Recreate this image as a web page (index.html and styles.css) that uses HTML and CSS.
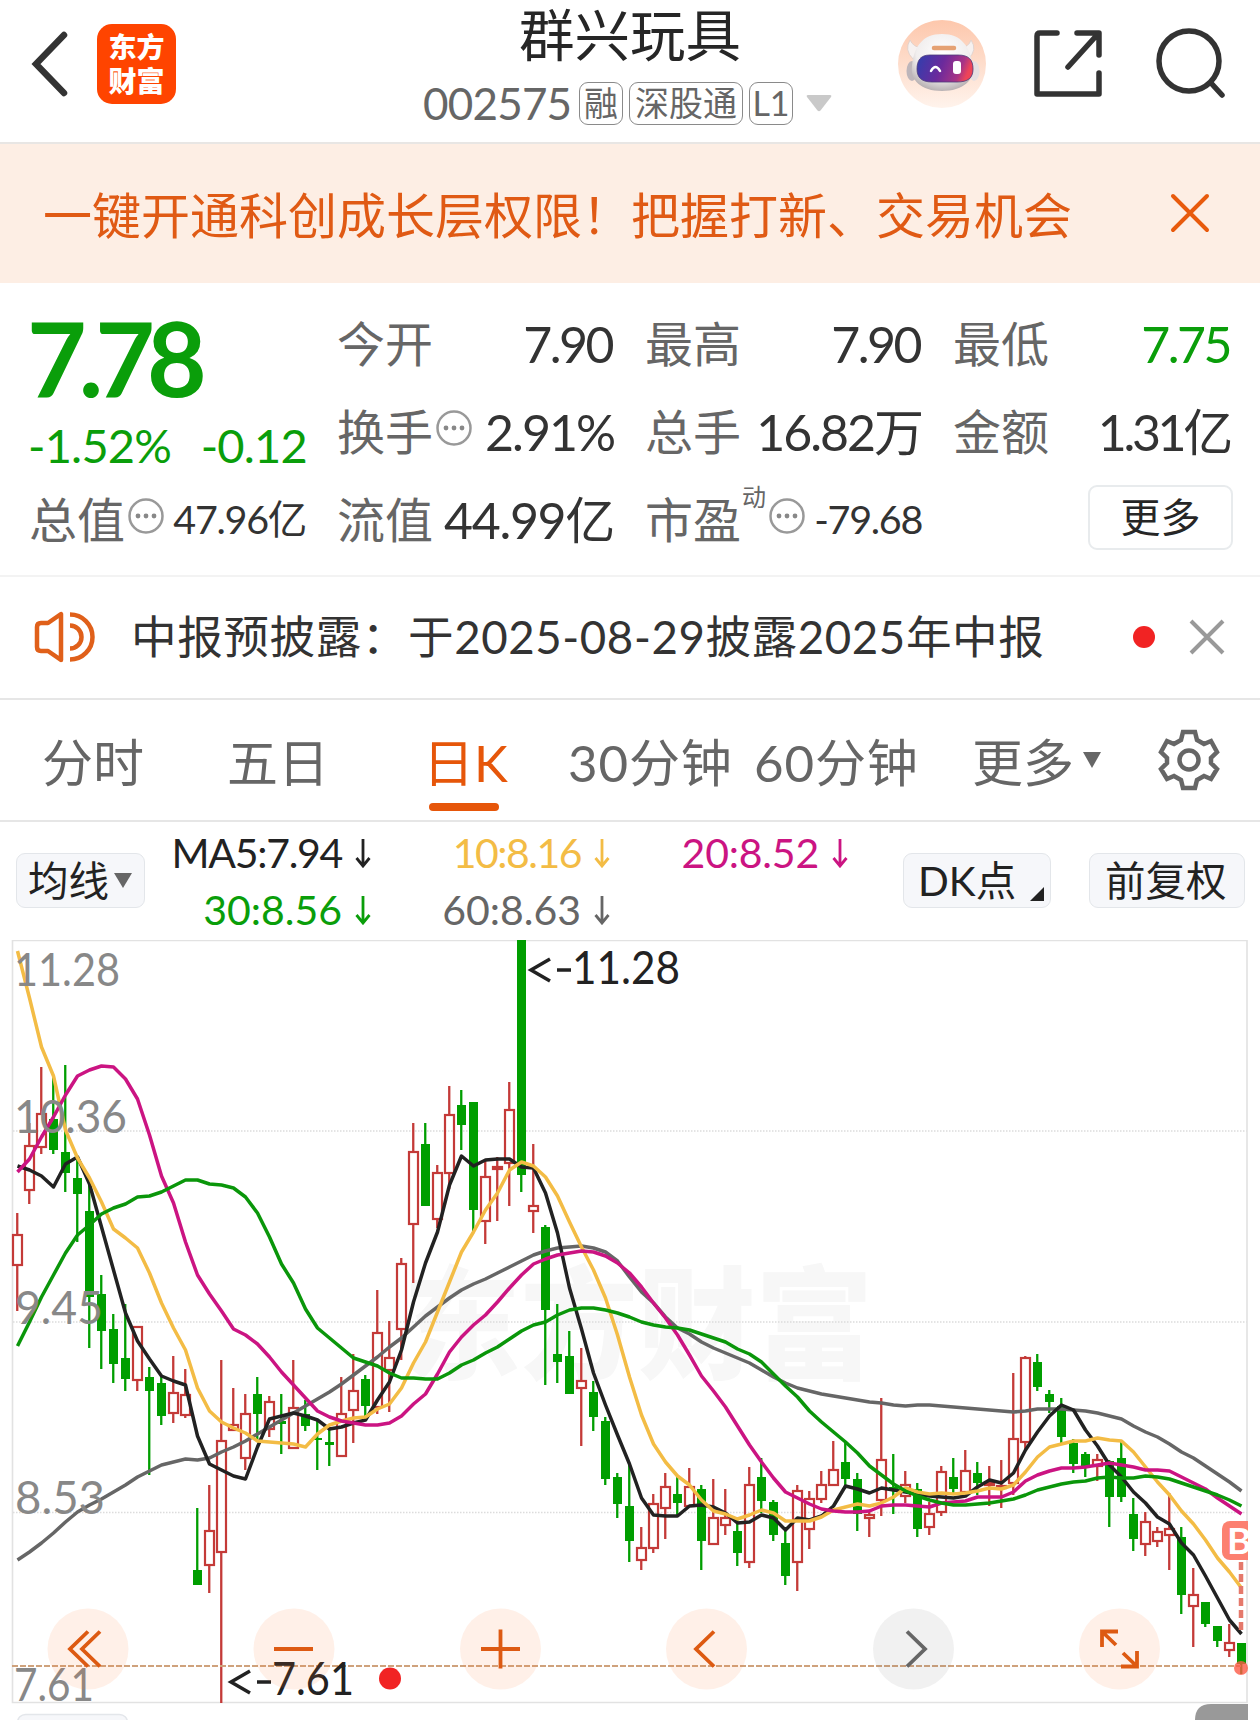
FILE: index.html
```html
<!DOCTYPE html>
<html lang="zh-CN">
<head>
<meta charset="utf-8">
<title>群兴玩具 002575</title>
<link rel="stylesheet" href="styles.css">
</head>
<body>
<header class="header">
  <svg class="back" width="44" height="72" viewBox="0 0 44 72"><path d="M38 7 10 36l28 29" fill="none" stroke="#333" stroke-width="6.500" stroke-linecap="round"/></svg>
  <div class="logo"><span>东方</span><span>财富</span></div>
  <div class="stock">
    <h1 class="stock-name">群兴玩具</h1>
    <div class="stock-meta">
      <span class="code">002575</span>
      <span class="tag tag-one">融</span>
      <span class="tag tag-three">深股通</span>
      <span class="tag tag-one">L1</span>
      <svg class="caret" width="26" height="18" viewBox="0 0 26 18"><path d="M2 1h22q2 0 1 2L14.500 16.500q-1.500 1.500-3 0L1 3Q0 1 2 1z" fill="#c9c9c9"/></svg>
    </div>
  </div>
  <svg class="avatar" width="88" height="88" viewBox="0 0 88 88">
    <defs>
      <linearGradient id="halo" x1="0" y1="0" x2="0" y2="1"><stop offset="0" stop-color="#fdc7ac"/><stop offset="1" stop-color="#fff3ec"/></linearGradient>
      <linearGradient id="visor" x1="0" y1="0" x2="1" y2="0.200"><stop offset="0" stop-color="#2f3fae"/><stop offset="0.500" stop-color="#6b2a9c"/><stop offset="0.850" stop-color="#a83486"/><stop offset="1" stop-color="#ee4458"/></linearGradient>
      <radialGradient id="shell" cx="0.500" cy="0.350" r="0.650"><stop offset="0" stop-color="#fff"/><stop offset="0.650" stop-color="#f1eeee"/><stop offset="1" stop-color="#b9b2b4"/></radialGradient>
    </defs>
    <circle cx="44" cy="44" r="44" fill="url(#halo)"/>
    <path d="M12 20q-6 10 3 19l9-11q-9-1-12-8zM73 20q7 10-3 19l-8-11q9-1 11-8z" fill="#f6f1f0" stroke="#dccfcb" stroke-width="0.800"/>
    <ellipse cx="14" cy="51" rx="5.500" ry="10" fill="#bdb5ba"/><ellipse cx="76" cy="51" rx="5.500" ry="10" fill="#e6dfe1"/>
    <path d="M44 14c20 0 28 13 31 32 2 14-10 25-31 25S12 60 14 46c2-19 10-32 30-32z" fill="url(#shell)"/>
    <path d="M36 28h20" stroke="#e5a173" stroke-width="4.500" stroke-linecap="round"/>
    <path d="M32 35h28c11 0 15 5 15 14s-5 13-16 13H34c-11 0-15-5-15-13s3-14 13-14z" fill="url(#visor)" stroke="#4b3a78" stroke-width="0.800"/>
    <path d="M33 51q4.500-8 9 0" fill="none" stroke="#fff" stroke-width="2.500" stroke-linecap="round"/>
    <rect x="55" y="41" width="8" height="13" rx="3" fill="#fff"/>
  </svg>
  <svg class="share" width="72" height="72" viewBox="0 0 72 72" fill="none" stroke="#333" stroke-width="5.500" stroke-linecap="round" stroke-linejoin="round"><path d="M25 6H8Q5 6 5 9v58h62V46M45 6h22v22M65 8 36 40"/></svg>
  <svg class="search" width="74" height="76" viewBox="0 0 74 76" fill="none" stroke="#333" stroke-width="5.500" stroke-linecap="round"><circle cx="35" cy="36" r="30"/><path d="m57 58 11 12"/></svg>
</header>

<section class="banner">
  <p>一键开通科创成长层权限！把握打新、交易机会</p>
  <svg width="42" height="42" viewBox="0 0 42 42"><path d="m4 4 34 34M38 4 4 38" stroke="#e85a0c" stroke-width="4" stroke-linecap="round"/></svg>
</section>

<section class="quote">
  <div class="price-block">
    <div class="price">7.78</div>
    <div class="change"><span>-1.52%</span><span>-0.12</span></div>
  </div>
  <div class="cell"><span class="label">今开</span><span class="value tight">7.90</span></div>
  <div class="cell"><span class="label">最高</span><span class="value tight">7.90</span></div>
  <div class="cell"><span class="label">最低</span><span class="value tight down">7.75</span></div>
  <div class="cell"><span class="label">换手</span><svg class="info" viewBox="0 0 36 36"><use href="#dots"/></svg><span class="value">2.91%</span></div>
  <div class="cell"><span class="label">总手</span><span class="value">16.82万</span></div>
  <div class="cell"><span class="label">金额</span><span class="value v-amt">1.31亿</span></div>
  <div class="cell"><span class="label">总值</span><svg class="info" viewBox="0 0 36 36"><use href="#dots"/></svg><span class="value small">47.96亿</span></div>
  <div class="cell"><span class="label">流值</span><span class="value v-float">44.99亿</span></div>
  <div class="cell"><span class="label">市盈</span><sup>动</sup><svg class="info" viewBox="0 0 36 36"><use href="#dots"/></svg><span class="value small">-79.68</span></div>
  <div class="cell last"><button class="more">更多</button></div>
</section>

<svg class="defs" width="0" height="0"><defs><g id="dots"><circle cx="18" cy="18" r="16.500" fill="none" stroke="#999" stroke-width="2.500"/><circle cx="10" cy="18" r="2.400" fill="#888"/><circle cx="18" cy="18" r="2.400" fill="#888"/><circle cx="26" cy="18" r="2.400" fill="#888"/></g></defs></svg>

<section class="notice">
  <svg class="speaker" width="62" height="54" viewBox="0 0 62 54" fill="none" stroke="#e0601a" stroke-width="4.500" stroke-linejoin="round"><path d="M4 17q0-4 4-4h7L28 4v46L15 41H8q-4 0-4-4z"/><path d="M37 4.500a22.500 22.500 0 0 1 0 45M37 15.500a11.500 11.500 0 0 1 0 23"/></svg>
  <p>中报预披露：于2025-08-29披露2025年中报</p>
  <i class="dot"></i>
  <svg class="close" width="36" height="36" viewBox="0 0 36 36"><path d="m2 2 32 32M34 2 2 34" stroke="#999" stroke-width="4"/></svg>
</section>

<nav class="tabs">
  <span class="t1">分时</span><span class="t2">五日</span><span class="t3 active">日K</span><span class="t4">30分钟</span><span class="t5">60分钟</span><span class="t6">更多</span>
  <svg class="tri" width="18" height="16" viewBox="0 0 18 16"><path d="M0 0h18L9 16z" fill="#666"/></svg>
  <svg class="gear" width="62" height="62" viewBox="0 0 62 62" fill="none" stroke="#666" stroke-width="4.500"><path d="M25 3H37L39 11 46 15 53 12 59 23 53 29V34L59 40 53 50 46 47 39 51 37 59H25L23 51 16 47 9 50 3 40 9 34V29L3 23 9 12 16 15 23 11z"/><circle cx="31" cy="31" r="9.500"/></svg>
</nav>

<section class="indicators">
  <button class="chip ma">均线<svg width="18" height="15" viewBox="0 0 18 15"><path d="M0 0h18L9 15z" fill="#666"/></svg></button>
  <div class="ma-grid">
    <span class="c5">MA5:7.94<svg class="arrow" viewBox="0 0 16 30"><use href="#down"/></svg></span>
    <span class="c10">10:8.16<svg class="arrow" viewBox="0 0 16 30"><use href="#down"/></svg></span>
    <span class="c20">20:8.52<svg class="arrow" viewBox="0 0 16 30"><use href="#down"/></svg></span>
    <span class="c30">30:8.56<svg class="arrow" viewBox="0 0 16 30"><use href="#down"/></svg></span>
    <span class="c60">60:8.63<svg class="arrow" viewBox="0 0 16 30"><use href="#down"/></svg></span>
  </div>
  <button class="chip dk">DK点<svg width="14" height="14" viewBox="0 0 14 14"><path d="M14 0v14H0z" fill="#222"/></svg></button>
  <button class="chip fq">前复权</button>
</section>
<svg class="defs" width="0" height="0"><defs><path id="down" d="M8 1v27M1.500 20 8 28l6.500-8" fill="none" stroke="currentColor" stroke-width="2.800"/></defs></svg>

<svg class="chart" width="1260" height="780" viewBox="0 940 1260 780">
  <defs><clipPath id="plot"><rect x="11" y="939" width="1237" height="765"/></clipPath></defs>
  <text class="watermark" x="403" y="1369" textLength="470" lengthAdjust="spacingAndGlyphs">东方财富</text>
  <path d="M13 1131H1247M13 1322H1247M13 1512.500H1247" stroke="#dcdcdc" stroke-width="1.500" stroke-dasharray="1.500 1.500"/>
  <path d="M12.500 940.500H1247V1702.500H12.500z" fill="none" stroke="#e2e2e2" stroke-width="1.600"/>
  <g id="candles" clip-path="url(#plot)"></g>
  <g id="averages" class="averages"></g>
  <g class="axis">
    <text x="14" y="986" textLength="106" lengthAdjust="spacingAndGlyphs">11.28</text>
    <text x="14" y="1133" textLength="113" lengthAdjust="spacingAndGlyphs">10.36</text>
    <text x="15" y="1324" textLength="88" lengthAdjust="spacingAndGlyphs">9.45</text>
    <text x="15" y="1514" textLength="90" lengthAdjust="spacingAndGlyphs">8.53</text>
    <text x="14" y="1701" textLength="80" lengthAdjust="spacingAndGlyphs">7.61</text>
  </g>
  <path d="M12 1666H1241" stroke="#cfa27c" stroke-width="1.800" stroke-dasharray="6 2"/>
  <g class="mark">
    <path d="M550 959 531 970l19 11M557 970h14M250 1671l-19 11 19 11M257 1682h14"/>
    <text x="572" y="984" textLength="108" lengthAdjust="spacingAndGlyphs">11.28</text>
    <text x="272" y="1695" textLength="82" lengthAdjust="spacingAndGlyphs">7.61</text>
  </g>
  <g clip-path="url(#plot)">
    <rect x="1222" y="1521" width="48" height="39" rx="8" fill="#fc8070"/>
    <text class="buy" x="1227" y="1554">B</text>
    <path d="M1241 1562v68" stroke="#e5796b" stroke-width="4.500" stroke-dasharray="8 4"/>
    <circle cx="1241" cy="1668" r="7" fill="#fc5a46" fill-opacity=".8"/>
  </g>
  <circle cx="390" cy="1678.500" r="11" fill="#f12323"/>
  <g fill="#ff7a30" fill-opacity=".11"><circle cx="88" cy="1649" r="40.500"/><circle cx="294" cy="1649" r="40.500"/><circle cx="500.500" cy="1649" r="40.500"/><circle cx="706.500" cy="1649" r="40.500"/><circle cx="1119.500" cy="1649" r="40.500"/></g>
  <circle cx="913.500" cy="1649" r="40.500" fill="#777" fill-opacity=".1"/>
  <g fill="none" stroke="#dd5a12" stroke-width="3.800">
    <path d="M88 1631.500 70 1649l18 17.500M100 1631.500 82 1649l18 17.500M274 1649h39M481 1649h39M500.500 1629.500v39M714 1631.500 696 1649l18 17.500"/>
    <path d="M1102 1647v-15.500h16M1103 1632.500l13 12.500M1137 1651v15.500h-16M1136 1665.500l-13-12.500"/>
  </g>
  <path d="m907 1631.500 18 17.500-18 17.500" fill="none" stroke="#666" stroke-width="3.800"/>
  <rect x="17.500" y="1714.500" width="110" height="30" rx="8" fill="#f6f7fa" stroke="#e3e6ea" stroke-width="1.500"/>
  <path d="M1195 1720q0-16 16-16h37v16z" fill="#999"/>
</svg>
<script src="chart.js"></script>
</body>
</html>
```
FILE: styles.css
```css
* { box-sizing: border-box; }
body { margin: 0; width: 1260px; height: 1720px; overflow: hidden; background: #fff; color: #262626; font-family: "Lato", "Noto Sans CJK SC", sans-serif; }
h1, p { margin: 0; font-weight: 400; white-space: nowrap; }
button { font-family: inherit; color: inherit; padding: 0; white-space: nowrap; }
svg { display: block; flex: none; }
.defs { position: absolute; }

.header { display: flex; height: 144px; border-bottom: 2px solid #e8e6e4; }
.back { margin: 28px 0 0 26px; }
.logo { display: flex; flex-direction: column; align-items: center; justify-content: center; width: 79px; height: 80px; margin: 24px 0 0 27px; border-radius: 15px; background: #ff4400; color: #fff; font-weight: 900; font-size: 28px; line-height: 34px; }
.stock { display: flex; flex-direction: column; margin-left: 247px; width: 411px; }
.stock-name { margin-left: 96px; font-size: 55.500px; line-height: 70px; }
.stock-meta { display: flex; align-items: center; height: 44px; margin-top: 11px; color: #666; }
.code { width: 156px; font-size: 44px; line-height: 44px; letter-spacing: -0.800px; }
.tag { display: flex; align-items: center; justify-content: center; height: 43px; margin-right: 6px; border: 1.500px solid #8a8a8a; border-radius: 9px; font-size: 34px; line-height: 38px; }
.tag-one { width: 44px; }
.tag-three { width: 114px; }
.caret { margin-left: 7px; }
.avatar { margin: 20px 0 0 64px; }
.share { margin: 27px 0 0 46px; }
.search { margin: 25px 0 0 50px; }

.banner { display: flex; justify-content: space-between; align-items: center; height: 139px; padding: 0 49px 0 43px; background: #fdeee4; color: #e05a14; font-size: 49px; line-height: 70px; }
.banner p { margin-top: 3px; }
.banner svg { margin-top: -2px; }

.quote { display: grid; grid-template-columns: repeat(4, 276px); grid-template-rows: 88px 88px 88px; column-gap: 32px; height: 294px; padding: 16px 0 0 30px; border-bottom: 2px solid #f3f3f3; }
.price-block { grid-row: span 2; color: #0a9e0a; }
.price { height: 100px; margin: 8px 0 0 -3px; font-size: 103px; font-weight: 700; line-height: 100px; letter-spacing: -8px; }
.change { display: flex; justify-content: space-between; margin: 3px -1px 0 -2px; font-size: 47px; line-height: 70px; letter-spacing: -0.800px; }
.cell { display: flex; align-items: center; height: 88px; white-space: nowrap; }
.label { margin: 2px 0 0 -1px; color: #666; font-size: 48px; line-height: 60px; }
.value { margin: 2px 0 0 auto; font-size: 50px; line-height: 60px; color: #333; letter-spacing: -2px; }
.tight { margin-right: 2px; letter-spacing: -2.500px; }
.v-amt { letter-spacing: -3.300px; }
.v-float { letter-spacing: -1.300px; }
.small { margin-top: 0; font-size: 39.500px; letter-spacing: -1.300px; }
.down { margin-right: 0; color: #0a9e0a; }
.info { width: 36px; height: 36px; margin: -7px 0 0 3px; }
.cell sup { align-self: flex-start; margin: 7px 0 0 1px; font-size: 24px; line-height: 30px; color: #666; }
.last { justify-content: flex-end; }
.more { width: 145px; height: 65px; margin: -4px -3px 0 0; border: 2px solid #e8ebed; border-radius: 9px; background: #fff; font-size: 40px; line-height: 50px; }

.notice { display: flex; align-items: center; height: 123px; padding: 0 35px 2px 33px; border-bottom: 2px solid #e6e6e6; color: #333; font-size: 45.600px; letter-spacing: 0.580px; }
.notice p { flex: 1; margin-left: 36px; line-height: 60px; }
.dot { width: 22px; height: 22px; border-radius: 50%; background: #f12323; }
.close { margin-left: 34px; }

.tabs { display: flex; align-items: center; height: 122px; border-bottom: 2px solid #e6e6e6; color: #666; font-size: 51px; line-height: 125px; white-space: nowrap; }
.tabs span { flex: none; height: 120px; }
.t1 { width: 185px; margin-left: 42px; }
.t2 { width: 196px; }
.t3 { position: relative; width: 145px; }
.t4 { width: 186px; letter-spacing: 0.900px; }
.t5 { width: 218px; letter-spacing: 0.900px; }
.t6 { width: 111px; }
.active { color: #e6560a; }
.active::after { content: ""; position: absolute; left: 6px; bottom: 9px; width: 70px; height: 8px; border-radius: 4px; background: #e6560a; }
.gear { margin-left: 57px; }

.indicators { display: flex; height: 118px; }
.chip { display: flex; align-items: center; flex: none; height: 55px; margin-top: 31px; border: 1.500px solid #e3e6ea; border-radius: 9px; background: #f6f7fa; font-size: 40.500px; line-height: 50px; color: #222; }
.ma { width: 129px; margin-left: 16px; padding-left: 11px; gap: 5px; }
.ma-grid { display: grid; grid-template-columns: 226px 239px 238px; grid-template-rows: 57px 57px; width: 758px; padding-top: 2px; font-size: 41px; line-height: 57px; }
.ma-grid span { display: flex; justify-content: flex-end; align-items: center; gap: 13px; }
.arrow { width: 16px; height: 30px; }
.c5 { color: #222; letter-spacing: -1.300px; }
.c10 { color: #f3bc45; letter-spacing: -1.500px; }
.c20 { color: #cb1482; letter-spacing: -0.200px; }
.c30 { color: #0a9e0a; }
.c60 { color: #666; }
.dk { width: 148px; padding-left: 14px; }
.dk svg { margin: 26px 0 0 14px; }
.fq { width: 156px; margin-left: 38px; padding-left: 15px; }

.watermark { font-size: 122px; font-weight: 900; fill: #f7f7f7; }
.axis { font-size: 47px; fill: #888; }
.mark { font-size: 47px; fill: #222; }
.mark path { fill: none; stroke: #222; stroke-width: 3.500; }
.buy { font-size: 37px; font-weight: 700; fill: #fff; }
.averages { fill: none; stroke-width: 3.500; stroke-linejoin: round; }
```
FILE: chart.js
```js
// Each candle: direction (1 up, 0 down), high, body top, body bottom, low.
const candles = [
[1,1213,1235,1265,1311],[1,1123,1146,1190,1204],[1,1067,1114,1147,1154],[0,1077,1119,1150,1154],[0,1065,1152,1173,1192],[0,1160,1178,1194,1242],
[0,1180,1211,1297,1348],[0,1275,1294,1331,1369],[0,1314,1329,1364,1383],[0,1304,1358,1379,1391],[1,1327,1327,1380,1391],[0,1367,1377,1391,1475],
[0,1377,1383,1416,1425],[1,1356,1393,1413,1423],[1,1369,1395,1415,1418],[0,1508,1570,1585,1585],[1,1485,1531,1565,1593],[1,1360,1441,1552,1703],
[1,1388,1425,1430,1431],[1,1394,1414,1458,1470],[0,1377,1394,1414,1440],[1,1396,1402,1429,1437],[0,1394,1421,1424,1454],[1,1360,1408,1448,1448],
[0,1400,1414,1426,1431],[0,1420,1438,1440,1470],[0,1427,1442,1445,1466],[1,1377,1414,1456,1456],[1,1354,1391,1410,1443],[0,1375,1379,1406,1420],
[1,1290,1333,1407,1414],[1,1321,1358,1370,1412],[1,1258,1264,1329,1360],[1,1123,1152,1224,1283],[0,1123,1144,1206,1206],[1,1165,1173,1219,1228],
[1,1086,1115,1173,1189],[0,1090,1105,1125,1150],[0,1102,1102,1210,1232],[1,1160,1177,1221,1244],[1,1157,1167,1169,1221],[1,1082,1110,1163,1206],
[0,940,940,1175,1192],[1,1144,1206,1211,1233],[0,1225,1227,1310,1385],[0,1304,1354,1362,1383],[0,1331,1356,1394,1394],[1,1348,1381,1388,1446],
[0,1381,1392,1417,1431],[0,1417,1421,1479,1485],[0,1473,1477,1504,1518],[0,1465,1506,1541,1562],[1,1527,1548,1560,1570],[1,1494,1504,1548,1553],
[1,1473,1487,1508,1539],[0,1475,1494,1503,1516],[1,1468,1487,1506,1506],[0,1485,1489,1541,1570],[1,1479,1518,1544,1545],[1,1489,1518,1525,1535],
[0,1517,1531,1553,1566],[1,1467,1485,1562,1568],[0,1458,1477,1501,1513],[0,1500,1502,1535,1541],[0,1527,1543,1576,1585],[1,1485,1491,1562,1591],
[1,1491,1499,1529,1549],[1,1471,1485,1499,1503],[1,1441,1470,1485,1485],[0,1442,1462,1479,1485],[0,1473,1479,1514,1531],[1,1510,1515,1518,1537],
[1,1398,1460,1500,1516],[0,1454,1487,1490,1514],[1,1471,1485,1496,1503],[0,1483,1489,1529,1537],[1,1502,1514,1527,1535],[1,1466,1472,1512,1516],
[0,1458,1477,1489,1493],[1,1450,1471,1492,1492],[0,1462,1473,1483,1495],[1,1466,1483,1485,1506],[1,1460,1486,1488,1508],[1,1373,1439,1483,1495],
[1,1356,1358,1442,1449],[0,1354,1362,1387,1391],[0,1390,1394,1402,1413],[0,1398,1406,1437,1443],[0,1439,1443,1464,1473],[0,1452,1454,1466,1477],
[1,1454,1460,1466,1481],[0,1460,1461,1497,1527],[0,1441,1458,1497,1502],[0,1498,1514,1539,1551],[1,1512,1522,1544,1556],[1,1527,1532,1541,1547],
[1,1493,1529,1535,1570],[0,1527,1537,1595,1614],[1,1568,1595,1606,1647],[0,1602,1602,1624,1627],[0,1626,1626,1641,1647],[1,1624,1643,1650,1657],
[0,1643,1643,1664,1674]
];
const averages = {
"#666666":[1560,1552,1543,1533,1522,1512,1505,1499,1492,1485,1477,1471,1465,1462,1459,1460,1458,1452,1447,1441,1434,1427,1420,1413,1406,1399,1392,1384,1375,1366,1357,1347,1338,1327,1316,1307,1298,1290,1284,1279,1273,1267,1261,1255,1251,1248,1247,1246,1248,1252,1261,1277,1292,1303,1317,1328,1334,1342,1348,1353,1358,1363,1370,1377,1383,1388,1391,1394,1396,1398,1400,1402,1403,1405,1406,1405,1405,1406,1407,1408,1409,1410,1411,1412,1411,1409,1409,1409,1410,1411,1413,1416,1419,1426,1432,1437,1444,1452,1458,1466,1474,1482,1491],
"#222222":[1166,1170,1176,1187,1164,1157,1184,1227,1270,1313,1341,1359,1376,1381,1385,1436,1464,1470,1476,1479,1447,1419,1416,1413,1416,1420,1429,1427,1423,1420,1400,1382,1350,1302,1263,1232,1185,1156,1166,1160,1159,1159,1167,1168,1193,1233,1288,1329,1373,1405,1435,1464,1498,1515,1516,1516,1506,1505,1507,1513,1523,1522,1515,1518,1530,1518,1520,1516,1506,1486,1489,1493,1488,1490,1492,1494,1496,1497,1498,1496,1487,1480,1483,1473,1450,1432,1416,1405,1410,1430,1446,1465,1477,1492,1503,1517,1524,1543,1555,1576,1598,1620,1634],
"#f3bc45":[951,998,1047,1076,1130,1158,1178,1202,1229,1238,1248,1273,1303,1328,1350,1388,1411,1422,1428,1433,1441,1442,1443,1444,1447,1434,1425,1421,1418,1417,1409,1404,1388,1363,1342,1312,1282,1252,1232,1210,1193,1170,1162,1166,1177,1196,1222,1247,1270,1298,1335,1377,1415,1444,1462,1476,1485,1500,1511,1514,1519,1515,1510,1513,1521,1521,1521,1517,1510,1507,1504,1506,1503,1497,1488,1492,1494,1493,1494,1493,1491,1488,1489,1485,1472,1457,1447,1444,1441,1441,1438,1440,1441,1452,1467,1482,1495,1511,1524,1540,1558,1572,1588],
"#cb1482":[1172,1159,1137,1117,1095,1076,1070,1066,1067,1079,1099,1135,1176,1203,1242,1275,1294,1311,1329,1335,1344,1357,1372,1385,1398,1411,1417,1421,1423,1425,1425,1423,1416,1404,1394,1374,1352,1337,1325,1315,1302,1288,1275,1264,1259,1255,1253,1251,1252,1256,1263,1273,1287,1303,1318,1335,1355,1376,1391,1407,1426,1445,1462,1478,1492,1498,1504,1509,1511,1512,1512,1511,1506,1505,1505,1506,1507,1503,1502,1501,1497,1497,1497,1492,1481,1475,1471,1468,1468,1467,1465,1463,1465,1467,1470,1470,1471,1477,1483,1489,1498,1506,1514],
"#0a960a":[1346,1322,1297,1275,1253,1235,1225,1214,1208,1204,1197,1196,1192,1186,1180,1180,1184,1185,1188,1197,1213,1237,1264,1283,1309,1328,1338,1348,1358,1362,1366,1373,1378,1378,1379,1379,1373,1365,1360,1353,1347,1339,1331,1325,1322,1315,1310,1308,1308,1310,1313,1317,1322,1325,1327,1328,1330,1334,1338,1342,1349,1354,1362,1374,1386,1397,1411,1422,1432,1442,1453,1466,1475,1484,1491,1496,1500,1503,1505,1505,1504,1503,1501,1499,1495,1490,1487,1484,1482,1481,1478,1477,1478,1478,1476,1477,1479,1483,1487,1491,1495,1500,1506]
};
const STEP = 12;
const X0 = 17;
const RED = "#c43a38";
const GREEN = "#009e00";

document.getElementById("candles").innerHTML = candles.map(([up, high, top, bottom, low], i) => {
  const x = X0 + i * STEP;
  const wick = (a, b) => b > a ? `<rect x="${x - 0.900}" y="${a}" width="2.300" height="${b - a}" fill="${up ? RED : GREEN}"/>` : "";
  const body = up
    ? `<rect x="${x - 4}" y="${top}" width="9" height="${Math.max(1, bottom - top)}" fill="none" stroke="${RED}" stroke-width="2.200"/>`
    : `<rect x="${x - 4}" y="${top}" width="9" height="${bottom - top}" fill="${GREEN}"/>`;
  return wick(high, top) + body + wick(bottom, low);
}).join("");

document.getElementById("averages").innerHTML = Object.entries(averages).map(([color, ys]) =>
  `<polyline stroke="${color}" points="${ys.map((y, i) => `${X0 + i * STEP + 0.5},${y}`).join(" ")}"/>`
).join("");
```
